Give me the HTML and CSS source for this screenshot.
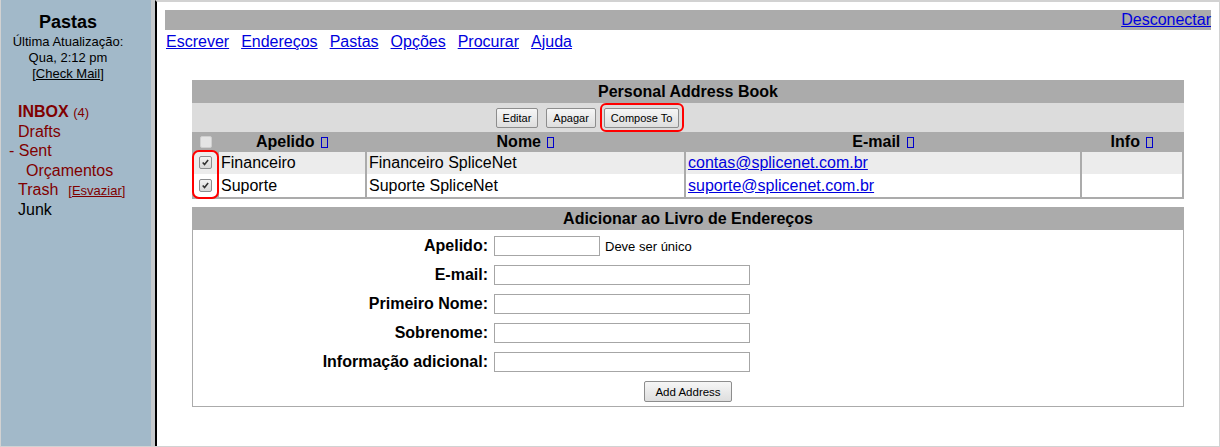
FILE: index.html
```html
<!DOCTYPE html>
<html lang="pt">
<head>
<meta charset="utf-8">
<title>Endereços</title>
<link rel="stylesheet" href="styles.css">
</head>
<body>
<div class="page">
  <aside class="sidebar">
    <div class="side-head">
      <div class="side-title">Pastas</div>
      <div class="side-info">Última Atualização:<br>Qua, 2:12 pm<br>[<a href="#" class="side-link">Check Mail</a>]</div>
    </div>
    <ul class="folders">
      <li class="folder"><a href="#" class="f-link f-inbox">INBOX</a> <span class="f-count">(4)</span></li>
      <li class="folder"><a href="#" class="f-link">Drafts</a></li>
      <li class="folder folder-open"><span class="f-toggle">-</span> <a href="#" class="f-link">Sent</a></li>
      <li class="folder folder-sub"><a href="#" class="f-link">Orçamentos</a></li>
      <li class="folder"><a href="#" class="f-link">Trash</a><span class="purge">[<a href="#" class="purge-link">Esvaziar</a>]</span></li>
      <li class="folder"><span class="f-plain">Junk</span></li>
    </ul>
  </aside>
  <main class="main">
    <div class="topbar"><a href="#" class="link">Desconectar</a></div>
    <nav class="menu">
      <a href="#" class="link">Escrever</a>
      <a href="#" class="link">Endereços</a>
      <a href="#" class="link">Pastas</a>
      <a href="#" class="link">Opções</a>
      <a href="#" class="link">Procurar</a>
      <a href="#" class="link">Ajuda</a>
    </nav>

    <section class="abook">
      <div class="band-title">Personal Address Book</div>
      <div class="abook-actions">
        <button class="btn">Editar</button>
        <button class="btn">Apagar</button>
        <span class="mark-btn"><button class="btn">Compose To</button></span>
      </div>
      <div class="list-wrap">
        <table class="list">
          <colgroup>
            <col class="col-cb"><col class="col-nick"><col class="col-name"><col class="col-mail"><col class="col-info">
          </colgroup>
          <thead>
            <tr>
              <th><span class="cb cb-off"></span></th>
              <th>Apelido <span class="sort"></span></th>
              <th>Nome <span class="sort"></span></th>
              <th>E-mail <span class="sort"></span></th>
              <th>Info <span class="sort"></span></th>
            </tr>
          </thead>
          <tbody>
            <tr class="row-alt">
              <td class="c-cb"><span class="cb"><svg class="tick" viewBox="0 0 13 13"><path d="M3.2 6.4 L5.4 8.9 L9.6 3.6"/></svg></span></td>
              <td>Financeiro</td>
              <td>Financeiro SpliceNet</td>
              <td><a href="#" class="link">contas@splicenet.com.br</a></td>
              <td></td>
            </tr>
            <tr class="row">
              <td class="c-cb"><span class="cb"><svg class="tick" viewBox="0 0 13 13"><path d="M3.2 6.4 L5.4 8.9 L9.6 3.6"/></svg></span></td>
              <td>Suporte</td>
              <td>Suporte SpliceNet</td>
              <td><a href="#" class="link">suporte@splicenet.com.br</a></td>
              <td></td>
            </tr>
          </tbody>
        </table>
        <span class="mark-col"></span>
      </div>
    </section>

    <section class="addr">
      <div class="band-title">Adicionar ao Livro de Endereços</div>
      <div class="addr-body">
        <label class="addr-label">Apelido:</label>
        <div class="addr-field"><input class="inp inp-short" type="text"><span class="hint">Deve ser único</span></div>
        <label class="addr-label">E-mail:</label>
        <div class="addr-field"><input class="inp" type="text"></div>
        <label class="addr-label">Primeiro Nome:</label>
        <div class="addr-field"><input class="inp" type="text"></div>
        <label class="addr-label">Sobrenome:</label>
        <div class="addr-field"><input class="inp" type="text"></div>
        <label class="addr-label">Informação adicional:</label>
        <div class="addr-field"><input class="inp" type="text"></div>
        <div class="addr-submit"><button class="btn btn-add">Add Address</button></div>
      </div>
    </section>
  </main>
</div>
</body>
</html>
```

FILE: styles.css
```css
* { box-sizing: border-box; }
html, body { margin: 0; padding: 0; }
body {
  font-family: "Liberation Sans", Arial, sans-serif;
  font-size: 16px;
  color: #000;
  background: #fff;
}
.page {
  display: flex;
  width: 1220px;
  height: 447px;
  border: 1px solid #d2d2d2;
  border-top: none;
  overflow: hidden;
}

/* ---------- left frame ---------- */
.sidebar {
  width: 154px;
  flex: none;
  background: #a2b9c9;
  border-right: 4px solid #c5c9cc;
  padding-top: 12px;
}
.side-head {
  width: 134px;
  text-align: center;
}
.side-title {
  font-size: 18px;
  font-weight: bold;
  line-height: 21px;
}
.side-info {
  font-size: 13px;
  line-height: 16px;
  margin-top: 1px;
}
.side-link { color: #000; text-decoration: underline; }
.folders {
  list-style: none;
  margin: 20px 0 0;
  padding: 0 0 0 8px;
  font-size: 16px;
  line-height: 19.2px;
}
.folder { padding-left: 9px; white-space: nowrap; }
.folder-open { padding-left: 0; color: #800000; }
.folder-sub { padding-left: 17px; }
.f-link { color: #800000; text-decoration: none; }
.f-inbox { font-weight: bold; }
.f-count { font-size: 13px; color: #800000; }
.f-plain { color: #000; }
.purge { font-size: 13px; color: #800000; margin-left: 10px; }
.purge-link { color: #800000; text-decoration: underline; }

/* ---------- main frame ---------- */
.main {
  flex: 1;
  border-left: 2px solid #000;
  border-top: 2px solid #d2d2d2;
  padding: 8px;
}
.link { color: #0000dd; text-decoration: underline; }
.topbar {
  background: #ababab;
  height: 20px;
  line-height: 20px;
  text-align: right;
}
.menu {
  display: flex;
  gap: 12px;
  padding-top: 3px;
  padding-left: 1px;
  line-height: 18px;
}

.abook {
  width: 992px;
  margin: 29px auto 0;
}
.band-title {
  background: #ababab;
  height: 23px;
  line-height: 23px;
  text-align: center;
  font-weight: bold;
}
.abook-actions {
  background: #dcdcdc;
  height: 29px;
  display: flex;
  align-items: center;
  justify-content: center;
  gap: 8px;
  padding: 1px 201px 0 0;
}
.btn {
  font-family: "Liberation Sans", Arial, sans-serif;
  font-size: 11px;
  color: #000;
  height: 20px;
  padding: 0 6px;
  border: 1px solid #8d8d8d;
  border-radius: 2px;
  background: linear-gradient(#f6f6f6, #dedede);
  line-height: 18px;
}
.mark-btn { position: relative; display: inline-flex; }
.mark-btn::after {
  content: "";
  position: absolute;
  top: -5px; right: -5px; bottom: -4px; left: -4px;
  border: 2px solid #ff0000;
  border-radius: 6px;
}

.list-wrap { position: relative; }
.list {
  width: 992px;
  table-layout: fixed;
  border-collapse: separate;
  border-spacing: 2px 0;
  background: #ababab;
  border-bottom: 2px solid #ababab;
}
.col-cb { width: 23px; }
.col-nick { width: 146px; }
.col-name { width: 317px; }
.col-mail { width: 394px; }
.col-info { width: 100px; }
.list th {
  height: 20px;
  padding: 0;
  font-weight: bold;
  text-align: center;
  vertical-align: middle;
  line-height: 18px;
}
.list td {
  height: 22px;
  padding: 0 2px;
  vertical-align: middle;
  line-height: 18px;
  white-space: nowrap;
}
.row td { height: 23px; }
.row-alt td { background: #ececec; }
.row td { background: #fff; }
.list td.c-cb { padding: 0; text-align: center; }
.sort {
  display: inline-block;
  width: 7px;
  height: 11px;
  border: 1px solid #0000cc;
  margin-left: 2px;
  vertical-align: -1px;
}
.cb {
  display: inline-block;
  width: 13px;
  height: 13px;
  border: 1px solid #8c8e90;
  border-radius: 2px;
  background: linear-gradient(#f2f2f2, #d8d8d8);
  vertical-align: middle;
  position: relative;
  top: -1px;
}
.cb-off {
  width: 12px;
  height: 12px;
  border-color: #cfcfcf;
  background: #e4e4e4;
}
.tick { display: block; width: 11px; height: 11px; }
.tick path { fill: none; stroke: #333; stroke-width: 1.9; }
.mark-col {
  position: absolute;
  left: 0;
  top: 18px;
  width: 27px;
  height: 49px;
  border: 2px solid #ff0000;
  border-radius: 7px;
}

.addr {
  width: 992px;
  margin: 8px auto 0;
}
.addr-body {
  border: 1px solid #ababab;
  border-top: none;
  display: grid;
  grid-template-columns: 295px auto;
  column-gap: 6px;
  row-gap: 9px;
  padding: 6px 0 4px;
}
.addr-label {
  font-weight: bold;
  text-align: right;
  align-self: center;
  line-height: 18px;
}
.addr-field { display: flex; align-items: center; }
.inp {
  width: 256px;
  height: 20px;
  border: 1px solid #a6a6a6;
  background: #fff;
  margin: 0;
  padding: 0 2px;
}
.inp-short { width: 106px; }
.hint { font-size: 13px; margin-left: 5px; }
.addr-submit {
  grid-column: 1 / 3;
  display: flex;
  justify-content: center;
}
.btn-add { height: 21px; padding: 0 10px; font-size: 11.5px; }
```
